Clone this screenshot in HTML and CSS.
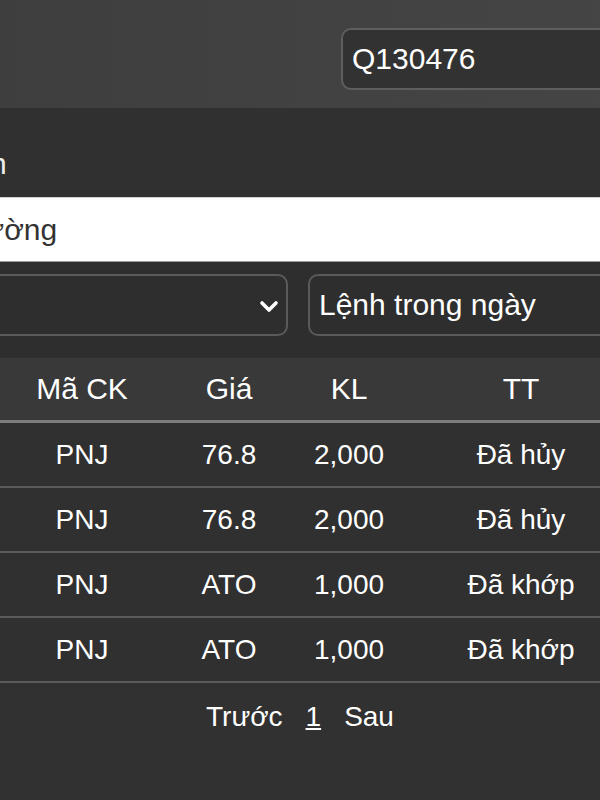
FILE: index.html
```html
<!DOCTYPE html>
<html lang="vi">
<head>
    <meta charset="UTF-8">
    <meta name="viewport" content="width=device-width, initial-scale=1.0">
    <title>Sổ lệnh</title>
    <link rel="stylesheet" href="styles.css">
</head>
<body>
<div class="page">

    <div class="topbar">
        <input class="account" type="text" value="Q130476">
    </div>

    <div class="section-title">Tài khoản</div>

    <div class="market">Lệnh thường</div>

    <div class="filters">
        <div class="select">
            <span></span>
            <svg width="20" height="13" viewBox="0 0 20 13">
                <path d="M3 3 L10 10 L17 3" fill="none" stroke="#fff" stroke-width="3.6" stroke-linecap="round" stroke-linejoin="round"/>
            </svg>
        </div>
        <div class="select">
            <span>Lệnh trong ngày</span>
        </div>
    </div>

    <div class="orders">
        <div class="row head">
            <div></div>
            <div>Mã CK</div>
            <div>Giá</div>
            <div>KL</div>
            <div>TT</div>
            <div></div>
        </div>
        <div class="row">
            <div></div>
            <div>PNJ</div>
            <div>76.8</div>
            <div>2,000</div>
            <div>Đã hủy</div>
            <div></div>
        </div>
        <div class="row">
            <div></div>
            <div>PNJ</div>
            <div>76.8</div>
            <div>2,000</div>
            <div>Đã hủy</div>
            <div></div>
        </div>
        <div class="row">
            <div></div>
            <div>PNJ</div>
            <div>ATO</div>
            <div>1,000</div>
            <div>Đã khớp</div>
            <div></div>
        </div>
        <div class="row">
            <div></div>
            <div>PNJ</div>
            <div>ATO</div>
            <div>1,000</div>
            <div>Đã khớp</div>
            <div></div>
        </div>
    </div>

    <div class="pager">
        <span>Trước</span>
        <a href="#" class="current">1</a>
        <span>Sau</span>
    </div>

</div>
</body>
</html>
```

FILE: styles.css
```css
body {
    margin: 0;
    background-color: #313131;
    font-family: "Liberation Sans", Arial, sans-serif;
    color: #fff;
    overflow: hidden;
}
.page {
    width: 864px;
    margin-left: -132px;
}
.topbar {
    display: flex;
    justify-content: flex-end;
    height: 108px;
    padding: 28px 12px 0 0;
    box-sizing: border-box;
    background: linear-gradient(to right, #3d3d3d, #464646);
}
.account {
    width: 379px;
    height: 62px;
    padding: 0 9px;
    border: 2px solid #5e5e5e;
    border-radius: 10px;
    background-color: #323232;
    color: #fff;
    font-family: inherit;
    font-size: 30px;
    box-sizing: border-box;
}
.section-title {
    height: 89px;
    padding: 36px 0 0 7px;
    box-sizing: border-box;
    background-color: #303030;
    font-size: 30px;
    line-height: 40px;
    color: #eee;
}
.market {
    height: 65px;
    padding-left: 16px;
    background-color: #fff;
    border-top: 1px solid #cfcfcf;
    border-bottom: 1px solid #9a9a9a;
    box-sizing: border-box;
    color: #333;
    font-size: 30px;
    line-height: 63px;
}
.filters {
    display: grid;
    grid-template-columns: 1fr 1fr;
    gap: 20px;
    height: 96px;
    padding: 12px 12px 0 8px;
    box-sizing: border-box;
    background-color: #2e2e2e;
}
.select {
    display: flex;
    align-items: center;
    justify-content: space-between;
    height: 62px;
    padding: 0 7px 0 9px;
    border: 2px solid #5a5a5a;
    border-radius: 10px;
    box-sizing: border-box;
    font-size: 30px;
}
.select svg {
    margin-top: 2px;
}
.orders {
    background-color: #303030;
}
.row {
    display: grid;
    grid-template-columns: 132px 164px 130px 110px 234px 1fr;
    height: 65px;
    border-bottom: 2px solid #5b5b5b;
    box-sizing: border-box;
    font-size: 28px;
}
.row div {
    display: flex;
    align-items: center;
    justify-content: center;
}
.row.head {
    background-color: #393939;
    border-bottom: 3px solid #7d7d7d;
    font-size: 30px;
}
.pager {
    display: flex;
    justify-content: center;
    gap: 23px;
    padding-top: 18px;
    font-size: 28px;
}
.pager a {
    color: #fff;
}
```
